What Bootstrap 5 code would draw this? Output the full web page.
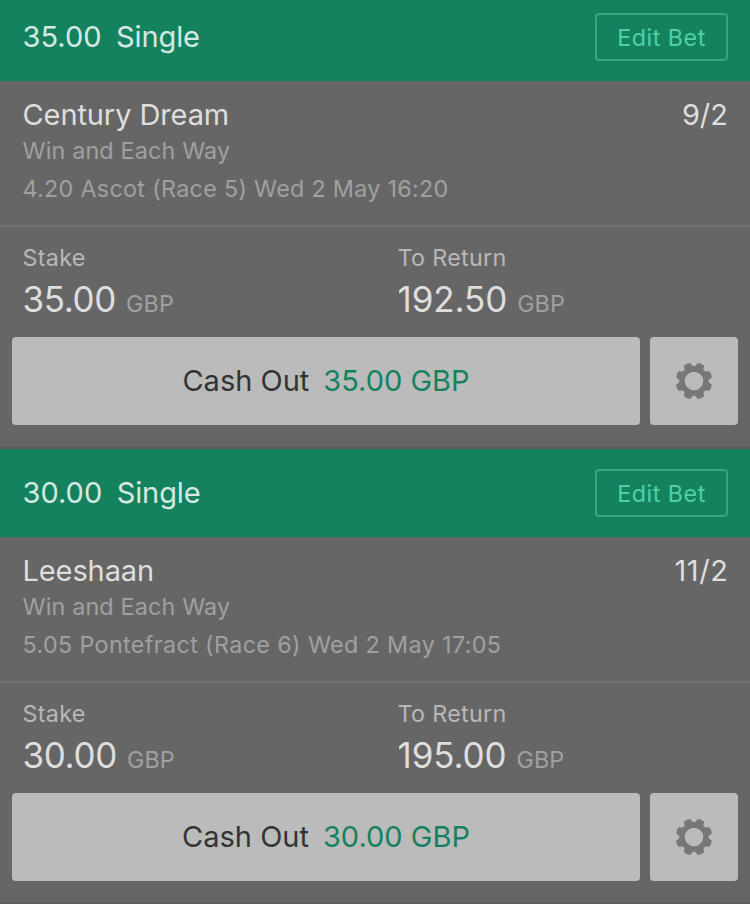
<!DOCTYPE html>
<html lang="en">
<head>
<meta charset="utf-8">
<meta name="viewport" content="width=device-width, initial-scale=1">
<title>My Bets</title>
<link href="https://cdn.jsdelivr.net/npm/bootstrap@5.3.0/dist/css/bootstrap.min.css" rel="stylesheet">
<style>
body{font-family:Inter,"Liberation Sans",sans-serif;background:#666;color:#dedede;height:904px}
.bets{height:904px}
.bet{height:456px;border-bottom:2px solid #5a5a5a}
.bet:first-child{margin-top:-7px}
.bet-head{height:88px;background:#15825f;padding:0 22px 0 22.5px;color:#d5e9e2}
.t30{font-size:29px;line-height:36px}
.t24{font-size:23.3px;line-height:30px;letter-spacing:.31px}
.kind{margin-left:14.5px;letter-spacing:-.1px}
.edit{width:133px;height:48px;padding:2px 0 0;border:2px solid #35a782;border-radius:4px;color:#50d1a5;letter-spacing:.5px}
.edit:hover{border-color:#35a782;color:#50d1a5}
.pick{height:146px;padding:16px 22px 0 22.5px;border-bottom:2px solid #737373}
.name{letter-spacing:-.1px}
.odds-long{letter-spacing:.6px;margin-right:-.6px}
.market{letter-spacing:.18px}
.market-row{margin-top:3px}
.event{margin-top:8px}
.event-wide{letter-spacing:.38px}
.dim{color:#a0a0a0}
.label{color:#b8b8b8}
.sums{height:110px;padding:16px 0 0 22.5px;flex-wrap:nowrap;overflow:hidden}
.sums .col-6{width:375px}
.amount{font-size:35px;line-height:42px;margin-top:5px;letter-spacing:-.35px}
.returns{letter-spacing:-.1px}
.cur{margin-left:10px;letter-spacing:.1px}
.panel{height:88px;background:#bbb;border-radius:4px;border:0;padding:0;color:#333}
.panel:hover{background:#bbb;color:#333}
.actions{padding:0 12px;gap:10px}
.cash{margin-right:14px}
.money{color:#15825f}
.gear-btn{width:88px}
</style>
</head>
<body class="m-0">
<svg class="d-none">
<defs><path id="tooth" d="M-5.7-13.2Q-3.6-14.4-3.5-17.9Q0-19.1 3.5-17.9Q3.6-14.4 5.7-13.2Z"/>
<symbol id="gear" viewBox="-20 -20 40 40"><g fill="#777"><circle r="11.8" fill="none" stroke="#777" stroke-width="5"/>
<use href="#tooth" transform="rotate(22.5)"/><use href="#tooth" transform="rotate(67.5)"/><use href="#tooth" transform="rotate(112.5)"/><use href="#tooth" transform="rotate(157.5)"/><use href="#tooth" transform="rotate(202.5)"/><use href="#tooth" transform="rotate(247.5)"/><use href="#tooth" transform="rotate(292.5)"/><use href="#tooth" transform="rotate(337.5)"/></g></symbol></defs>
</svg>
<main class="bets overflow-hidden d-flex flex-column">
<section class="bet flex-shrink-0">
<header class="bet-head d-flex align-items-center justify-content-between"><div class="t30 d-flex"><span>35.00</span><span class="kind">Single</span></div><button class="btn edit t24">Edit Bet</button></header>
<div class="pick"><div class="t30 d-flex justify-content-between"><span class="name">Century Dream</span><span>9/2</span></div><div class="t24 dim market-row"><span class="market">Win and Each Way</span></div><div class="t24 dim event"><span>4.20 Ascot (Race 5) Wed 2 May 16:20</span></div></div>
<div class="sums row g-0"><div class="col-6"><div class="t24 label"><span>Stake</span></div><div class="amount d-flex align-items-baseline"><span>35.00</span><span class="t24 dim cur">GBP</span></div></div><div class="col-6"><div class="t24 label"><span>To Return</span></div><div class="amount returns d-flex align-items-baseline"><span>192.50</span><span class="t24 dim cur">GBP</span></div></div></div>
<div class="actions d-flex"><button class="btn panel t30 flex-grow-1"><span class="cash">Cash Out</span><span class="money">35.00 GBP</span></button><button class="btn panel gear-btn d-flex align-items-center justify-content-center" aria-label="Settings"><svg width="40" height="40"><use href="#gear"/></svg></button></div>
</section>
<section class="bet flex-shrink-0">
<header class="bet-head d-flex align-items-center justify-content-between"><div class="t30 d-flex"><span>30.00</span><span class="kind">Single</span></div><button class="btn edit t24">Edit Bet</button></header>
<div class="pick"><div class="t30 d-flex justify-content-between"><span class="name">Leeshaan</span><span class="odds-long">11/2</span></div><div class="t24 dim market-row"><span class="market">Win and Each Way</span></div><div class="t24 dim event"><span class="event-wide">5.05 Pontefract (Race 6) Wed 2 May 17:05</span></div></div>
<div class="sums row g-0"><div class="col-6"><div class="t24 label"><span>Stake</span></div><div class="amount d-flex align-items-baseline"><span>30.00</span><span class="t24 dim cur">GBP</span></div></div><div class="col-6"><div class="t24 label"><span>To Return</span></div><div class="amount returns d-flex align-items-baseline"><span>195.00</span><span class="t24 dim cur">GBP</span></div></div></div>
<div class="actions d-flex"><button class="btn panel t30 flex-grow-1"><span class="cash">Cash Out</span><span class="money">30.00 GBP</span></button><button class="btn panel gear-btn d-flex align-items-center justify-content-center" aria-label="Settings"><svg width="40" height="40"><use href="#gear"/></svg></button></div>
</section>
</main>
<script src="https://cdn.jsdelivr.net/npm/bootstrap@5.3.0/dist/js/bootstrap.bundle.min.js"></script>
</body>
</html>
